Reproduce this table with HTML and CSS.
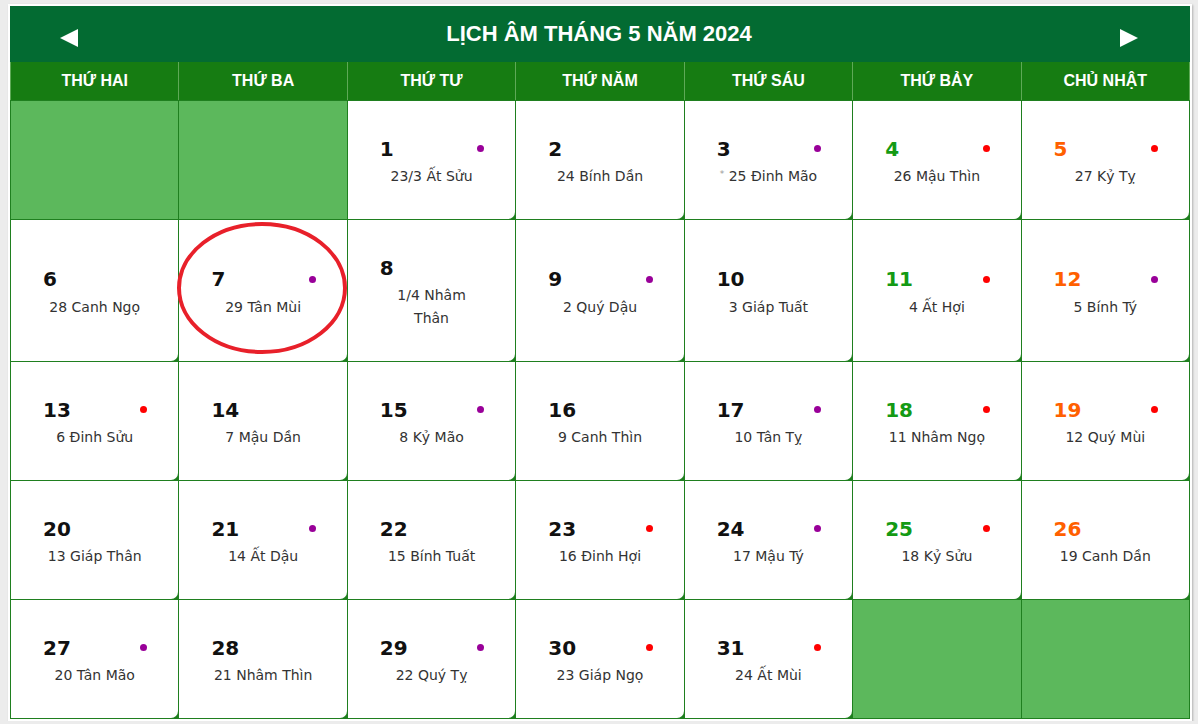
FILE: index.html
```html
<!DOCTYPE html>
<html lang="vi">
<head>
    <meta charset="UTF-8">
    <meta name="viewport" content="width=device-width, initial-scale=1.0">
    <title>Lịch âm tháng 5 năm 2024</title>
    <link rel="stylesheet" href="styles.css">
</head>
<body>
    <div class="calendar">
        <div class="title-bar">
            <a class="nav" href="#">
                <svg width="18" height="18" viewBox="0 0 18 18"><polygon points="18,0 18,18 0,9" fill="#fff"/></svg>
            </a>
            <h1 class="title">LỊCH ÂM THÁNG 5 NĂM 2024</h1>
            <a class="nav" href="#">
                <svg width="18" height="18" viewBox="0 0 18 18"><polygon points="0,0 0,18 18,9" fill="#fff"/></svg>
            </a>
        </div>

        <div class="weekdays">
            <div>THỨ HAI</div>
            <div>THỨ BA</div>
            <div>THỨ TƯ</div>
            <div>THỨ NĂM</div>
            <div>THỨ SÁU</div>
            <div>THỨ BẢY</div>
            <div>CHỦ NHẬT</div>
        </div>

        <div class="month">
            <!-- week 1 -->
            <div class="empty"></div>
            <div class="empty"></div>
            <div class="day"><div class="solar"><span class="num">1</span><span class="dot purple"></span></div><div class="lunar">23/3 Ất Sửu</div></div>
            <div class="day"><div class="solar"><span class="num">2</span></div><div class="lunar">24 Bính Dần</div></div>
            <div class="day"><div class="solar"><span class="num">3</span><span class="dot purple"></span></div><div class="lunar"><span class="mark">*</span> 25 Đinh Mão</div></div>
            <div class="day sat"><div class="solar"><span class="num">4</span><span class="dot red"></span></div><div class="lunar">26 Mậu Thìn</div></div>
            <div class="day sun"><div class="solar"><span class="num">5</span><span class="dot red"></span></div><div class="lunar">27 Kỷ Tỵ</div></div>

            <!-- week 2 -->
            <div class="day"><div class="solar"><span class="num">6</span></div><div class="lunar">28 Canh Ngọ</div></div>
            <div class="day today">
                <svg class="circle" width="172" height="140" viewBox="0 0 172 140"><ellipse cx="85" cy="68" rx="83" ry="64" fill="none" stroke="#e8202a" stroke-width="4"/></svg>
                <div class="solar"><span class="num">7</span><span class="dot purple"></span></div><div class="lunar">29 Tân Mùi</div>
            </div>
            <div class="day"><div class="solar"><span class="num">8</span></div><div class="lunar">1/4 Nhâm<br>Thân</div></div>
            <div class="day"><div class="solar"><span class="num">9</span><span class="dot purple"></span></div><div class="lunar">2 Quý Dậu</div></div>
            <div class="day"><div class="solar"><span class="num">10</span></div><div class="lunar">3 Giáp Tuất</div></div>
            <div class="day sat"><div class="solar"><span class="num">11</span><span class="dot red"></span></div><div class="lunar">4 Ất Hợi</div></div>
            <div class="day sun"><div class="solar"><span class="num">12</span><span class="dot purple"></span></div><div class="lunar">5 Bính Tý</div></div>

            <!-- week 3 -->
            <div class="day"><div class="solar"><span class="num">13</span><span class="dot red"></span></div><div class="lunar">6 Đinh Sửu</div></div>
            <div class="day"><div class="solar"><span class="num">14</span></div><div class="lunar">7 Mậu Dần</div></div>
            <div class="day"><div class="solar"><span class="num">15</span><span class="dot purple"></span></div><div class="lunar">8 Kỷ Mão</div></div>
            <div class="day"><div class="solar"><span class="num">16</span></div><div class="lunar">9 Canh Thìn</div></div>
            <div class="day"><div class="solar"><span class="num">17</span><span class="dot purple"></span></div><div class="lunar">10 Tân Tỵ</div></div>
            <div class="day sat"><div class="solar"><span class="num">18</span><span class="dot red"></span></div><div class="lunar">11 Nhâm Ngọ</div></div>
            <div class="day sun"><div class="solar"><span class="num">19</span><span class="dot red"></span></div><div class="lunar">12 Quý Mùi</div></div>

            <!-- week 4 -->
            <div class="day"><div class="solar"><span class="num">20</span></div><div class="lunar">13 Giáp Thân</div></div>
            <div class="day"><div class="solar"><span class="num">21</span><span class="dot purple"></span></div><div class="lunar">14 Ất Dậu</div></div>
            <div class="day"><div class="solar"><span class="num">22</span></div><div class="lunar">15 Bính Tuất</div></div>
            <div class="day"><div class="solar"><span class="num">23</span><span class="dot red"></span></div><div class="lunar">16 Đinh Hợi</div></div>
            <div class="day"><div class="solar"><span class="num">24</span><span class="dot purple"></span></div><div class="lunar">17 Mậu Tý</div></div>
            <div class="day sat"><div class="solar"><span class="num">25</span><span class="dot red"></span></div><div class="lunar">18 Kỷ Sửu</div></div>
            <div class="day sun"><div class="solar"><span class="num">26</span></div><div class="lunar">19 Canh Dần</div></div>

            <!-- week 5 -->
            <div class="day"><div class="solar"><span class="num">27</span><span class="dot purple"></span></div><div class="lunar">20 Tân Mão</div></div>
            <div class="day"><div class="solar"><span class="num">28</span></div><div class="lunar">21 Nhâm Thìn</div></div>
            <div class="day"><div class="solar"><span class="num">29</span><span class="dot purple"></span></div><div class="lunar">22 Quý Tỵ</div></div>
            <div class="day"><div class="solar"><span class="num">30</span><span class="dot red"></span></div><div class="lunar">23 Giáp Ngọ</div></div>
            <div class="day"><div class="solar"><span class="num">31</span><span class="dot red"></span></div><div class="lunar">24 Ất Mùi</div></div>
            <div class="empty"></div>
            <div class="empty"></div>
        </div>
    </div>
</body>
</html>
```

FILE: styles.css
```css
body {
    margin: 0;
    padding: 4px 0 0 8px;
    background-color: #ececec;
    font-family: "DejaVu Sans", Verdana, sans-serif;
    color: #333;
}
.calendar {
    width: 1180px;
    border: 2px solid #fff;
    box-shadow: 1px 1px 2px rgba(0, 0, 0, 0.25);
}
.title-bar {
    height: 56px;
    background-color: #036b32;
    display: flex;
    align-items: center;
    justify-content: space-between;
    padding: 0 52px 0 50px;
}
.nav {
    display: flex;
    padding-top: 8px;
}
.title {
    margin: 0;
    font-family: "Liberation Sans", Arial, sans-serif;
    font-size: 22px;
    font-weight: bold;
    color: #fff;
}
.weekdays {
    display: grid;
    grid-template-columns: repeat(7, 1fr);
    gap: 1px;
    padding: 0 1px;
    background-color: #5ea957;
}
.weekdays div {
    height: 38px;
    line-height: 38px;
    text-align: center;
    background-color: #167c12;
    color: #fff;
    font-family: "Liberation Sans", Arial, sans-serif;
    font-size: 16px;
    font-weight: bold;
}
.month {
    display: grid;
    grid-template-columns: repeat(7, 1fr);
    gap: 1px;
    background-color: #1f7f1f;
    border: 1px solid #1f7f1f;
}
.empty {
    background-color: #5cb85c;
}
.day {
    position: relative;
    background-color: #fff;
    border-bottom-right-radius: 7px;
    padding: 31px 32px;
    display: flex;
    flex-direction: column;
    justify-content: center;
}
.solar {
    height: 33px;
    display: flex;
    align-items: center;
    justify-content: space-between;
}
.num {
    font-size: 20px;
    font-weight: bold;
    color: #111;
}
.sat .num {
    color: #149a14;
}
.sun .num {
    color: #ff6000;
}
.dot {
    width: 7px;
    height: 7px;
    border-radius: 50%;
    margin-right: -1px;
}
.purple {
    background-color: #990099;
}
.red {
    background-color: #ff0000;
}
.lunar {
    margin: 0 -24px;
    line-height: 23px;
    font-size: 14px;
    text-align: center;
    white-space: nowrap;
}
.mark {
    display: inline-block;
    line-height: 0;
    font-size: 9px;
    vertical-align: 4px;
    color: #999;
}
.circle {
    position: absolute;
    top: 0;
    left: -2px;
    pointer-events: none;
}
```
